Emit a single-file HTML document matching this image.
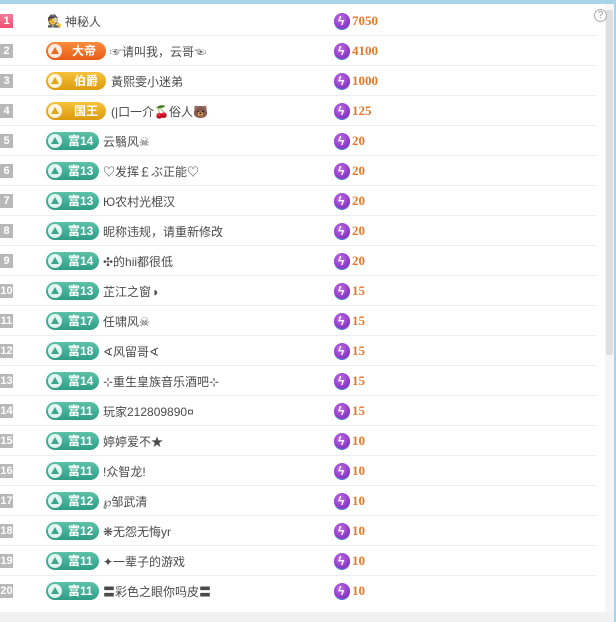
<!DOCTYPE html>
<html><head><meta charset="utf-8"><style>
*{margin:0;padding:0;box-sizing:border-box}
body{width:616px;height:622px;overflow:hidden;background:#fff;font-family:"Liberation Sans","Noto Sans CJK SC",sans-serif;position:relative}
.top{position:absolute;left:0;top:0;width:616px;height:4px;background:#a9d3e6}
.rstrip{position:absolute;right:0;top:0;width:2px;height:622px;background:#a9d3e6}
.track{position:absolute;left:605px;top:4px;width:9px;height:608px;background:#f6f6f6}
.thumb{position:absolute;left:606px;top:10px;width:7px;height:345px;background:#dedede;border-radius:2px}
.bottom{position:absolute;left:0;top:612px;width:614px;height:10px;background:#f1f1f1}
.q{position:absolute;left:594px;top:9px;width:13px;height:13px;border:1px solid #aaa;border-radius:50%;font-size:10px;color:#999;text-align:center;line-height:11px}
.row{position:absolute;left:0;width:596px;height:30px;border-bottom:1px solid #eee}
.rk{position:absolute;left:0;top:8px;width:13px;height:14px;background:#b8b8b8;color:#fff;font-size:11px;font-weight:bold;text-align:center;line-height:14px}
.r1{background:linear-gradient(#f47a9a,#f0506f)}
.bd{position:absolute;left:46px;top:6px;height:18px;border-radius:9px;color:#fff;font-size:12px;font-weight:bold;line-height:18px;padding-left:22px}
.bd::before{content:"";position:absolute;left:2px;top:2px;width:14px;height:14px;border-radius:50%;background:#fff;opacity:.85}
.bd::after{content:"";position:absolute;left:5px;top:5px;width:0;height:0;border-left:4px solid transparent;border-right:4px solid transparent;border-bottom:7px solid currentColor}
.t{width:53px;background:linear-gradient(#5cc2a8,#2e9c86);color:#fff}
.t::after{border-bottom-color:#3aa88f}
.o{width:60px;background:linear-gradient(#fb8a3c,#e95d16);padding-left:26px}
.o::after{border-bottom-color:#e96a20}
.g{width:60px;background:linear-gradient(#f6c23c,#dc9a0c);padding-left:28px}
.g::after{border-bottom-color:#e2a514}
.nm{position:absolute;top:7px;font-size:12px;color:#4a4a4a;white-space:nowrap}
.ic{position:absolute;left:334px;top:7px;width:16px;height:16px;border-radius:50%;background:radial-gradient(circle at 40% 35%,#c06ae8,#6d1fb0);box-shadow:0 1px 0 #4b79d8}
.ic::after{content:"ϟ";position:absolute;left:4px;top:0;color:#fff;font-size:12px;font-weight:bold;line-height:16px}
.num{position:absolute;left:352px;top:7px;font-family:"Liberation Serif",serif;font-weight:bold;font-size:13px;color:#e8782a}
</style></head><body>
<div class="top"></div>
<div class="track"></div><div class="thumb"></div>
<div class="rstrip"></div>
<div class="bottom"></div>
<div class="q">?</div>

<div class="row" style="top:6px"><div class="rk r1">1</div><span style="position:absolute;left:47px;top:8px;font-size:12px">🕵</span><div class="nm" style="left:65px">神秘人</div><div class="ic"></div><div class="num">7050</div></div>
<div class="row" style="top:36px"><div class="rk">2</div><div class="bd o">大帝</div><div class="nm" style="left:110px">☞请叫我，云哥☜</div><div class="ic"></div><div class="num">4100</div></div>
<div class="row" style="top:66px"><div class="rk">3</div><div class="bd g">伯爵</div><div class="nm" style="left:111px">黃熙雯小迷弟</div><div class="ic"></div><div class="num">1000</div></div>
<div class="row" style="top:96px"><div class="rk">4</div><div class="bd g">国王</div><div class="nm" style="left:111px">(|口一介🍒俗人🐻</div><div class="ic"></div><div class="num">125</div></div>
<div class="row" style="top:126px"><div class="rk">5</div><div class="bd t">富14</div><div class="nm" style="left:103px">云翳风☠</div><div class="ic"></div><div class="num">20</div></div>
<div class="row" style="top:156px"><div class="rk">6</div><div class="bd t">富13</div><div class="nm" style="left:103px">♡发挥￡ぶ正能♡</div><div class="ic"></div><div class="num">20</div></div>
<div class="row" style="top:186px"><div class="rk">7</div><div class="bd t">富13</div><div class="nm" style="left:103px">Ю农村光棍汉</div><div class="ic"></div><div class="num">20</div></div>
<div class="row" style="top:216px"><div class="rk">8</div><div class="bd t">富13</div><div class="nm" style="left:103px">昵称违规，请重新修改</div><div class="ic"></div><div class="num">20</div></div>
<div class="row" style="top:246px"><div class="rk">9</div><div class="bd t">富14</div><div class="nm" style="left:103px">✣的hii都很低</div><div class="ic"></div><div class="num">20</div></div>
<div class="row" style="top:276px"><div class="rk">10</div><div class="bd t">富13</div><div class="nm" style="left:103px">芷江之窗◑</div><div class="ic"></div><div class="num">15</div></div>
<div class="row" style="top:306px"><div class="rk">11</div><div class="bd t">富17</div><div class="nm" style="left:103px">任啸风☠</div><div class="ic"></div><div class="num">15</div></div>
<div class="row" style="top:336px"><div class="rk">12</div><div class="bd t">富18</div><div class="nm" style="left:103px">∢风留哥∢</div><div class="ic"></div><div class="num">15</div></div>
<div class="row" style="top:366px"><div class="rk">13</div><div class="bd t">富14</div><div class="nm" style="left:103px">⊹重生皇族音乐酒吧⊹</div><div class="ic"></div><div class="num">15</div></div>
<div class="row" style="top:396px"><div class="rk">14</div><div class="bd t">富11</div><div class="nm" style="left:103px">玩家212809890¤</div><div class="ic"></div><div class="num">15</div></div>
<div class="row" style="top:426px"><div class="rk">15</div><div class="bd t">富11</div><div class="nm" style="left:103px">婷婷爱不★</div><div class="ic"></div><div class="num">10</div></div>
<div class="row" style="top:456px"><div class="rk">16</div><div class="bd t">富11</div><div class="nm" style="left:103px">!众智龙!</div><div class="ic"></div><div class="num">10</div></div>
<div class="row" style="top:486px"><div class="rk">17</div><div class="bd t">富12</div><div class="nm" style="left:103px">℘邹武清</div><div class="ic"></div><div class="num">10</div></div>
<div class="row" style="top:516px"><div class="rk">18</div><div class="bd t">富12</div><div class="nm" style="left:103px">❋无怨无悔yr</div><div class="ic"></div><div class="num">10</div></div>
<div class="row" style="top:546px"><div class="rk">19</div><div class="bd t">富11</div><div class="nm" style="left:103px">✦一辈子的游戏</div><div class="ic"></div><div class="num">10</div></div>
<div class="row" style="top:576px;border-bottom:none"><div class="rk">20</div><div class="bd t">富11</div><div class="nm" style="left:103px">〓彩色之眼你吗皮〓</div><div class="ic"></div><div class="num">10</div></div>
</body></html>
